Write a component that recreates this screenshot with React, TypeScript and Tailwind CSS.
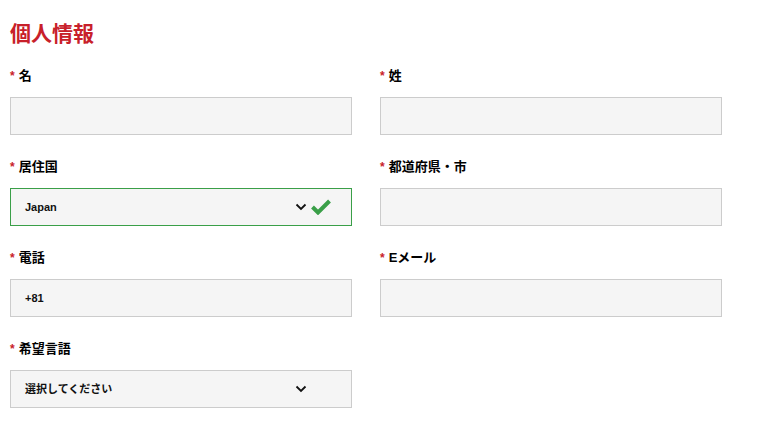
import React from "react";

const font = { fontFamily: '"Liberation Sans", "Noto Sans CJK JP", sans-serif' };

function Chevron() {
  return (
    <svg width="12" height="8" viewBox="0 0 12 8" className="shrink-0">
      <path d="M1.5 1.5 L6 6 L10.5 1.5" fill="none" stroke="#111" strokeWidth="1.8" />
    </svg>
  );
}

function Check() {
  return (
    <svg width="20" height="16" viewBox="0 0 20 16" className="shrink-0">
      <path d="M1.5 8 L7 13.5 L18.5 2" fill="none" stroke="#3a9f48" strokeWidth="4" />
    </svg>
  );
}

function Field({
  label,
  value,
  select,
  valid,
}: {
  label: string;
  value?: string;
  select?: boolean;
  valid?: boolean;
}) {
  return (
    <div className="flex flex-col">
      <label className="flex items-center h-[18px] text-[13px] font-bold text-black">
        <span className="text-[#c8202a] mr-[4px] text-[12px]">*</span>
        {label}
      </label>
      <div
        className={`mt-[12px] h-[38px] flex items-center pl-[14px] pr-[20px] bg-[#f5f5f5] border ${
          valid ? "border-[#3a9f48]" : "border-[#cccccc]"
        }`}
      >
        <span className="flex-1 text-[11px] font-bold text-[#111]">{value}</span>
        {select && (
          <div className="flex items-center gap-[4px]">
            <Chevron />
            {valid ? <Check /> : <span className="w-[20px]" />}
          </div>
        )}
      </div>
    </div>
  );
}

export default function App() {
  return (
    <div className="bg-white w-[757px] h-[437px] pl-[10px] pt-[20px]" style={font}>
      <h1 className="text-[21px] font-bold text-[#c8202a] leading-[28px]">個人情報</h1>
      <div className="mt-[19px] grid grid-cols-[342px_342px] gap-x-[28px] gap-y-[23px]">
        <Field label="名" />
        <Field label="姓" />
        <Field label="居住国" value="Japan" select valid />
        <Field label="都道府県・市" />
        <Field label="電話" value="+81" />
        <Field label="Eメール" />
        <Field label="希望言語" value="選択してください" select />
      </div>
    </div>
  );
}
